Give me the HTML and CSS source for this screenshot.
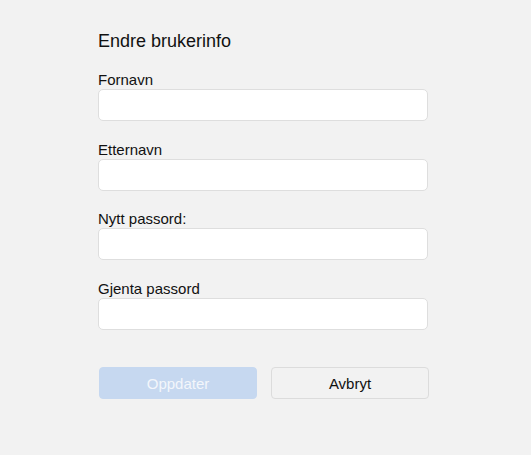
FILE: index.html
```html
<!DOCTYPE html>
<html lang="no">
<head>
<meta charset="utf-8">
<link rel="stylesheet" href="styles.css">
</head>
<body>
<div class="page">
  <form class="form">
    <h1 class="title">Endre brukerinfo</h1>
    <div class="group">
      <label class="label">Fornavn</label>
      <input class="input" type="text">
    </div>
    <div class="group">
      <label class="label">Etternavn</label>
      <input class="input" type="text">
    </div>
    <div class="group">
      <label class="label">Nytt passord:</label>
      <input class="input" type="password">
    </div>
    <div class="group">
      <label class="label">Gjenta passord</label>
      <input class="input" type="password">
    </div>
    <div class="actions">
      <button class="btn btn-primary" type="button" disabled>Oppdater</button>
      <button class="btn btn-secondary" type="button">Avbryt</button>
    </div>
  </form>
</div>
</body>
</html>
```
FILE: styles.css
```css
html, body {
  margin: 0;
  padding: 0;
  background: #f2f2f2;
}
body {
  font-family: "Liberation Sans", Arial, sans-serif;
  color: #111;
  width: 531px;
  height: 455px;
  overflow: hidden;
}
.page {
  padding: 31px 0 0 98px;
}
.form {
  width: 331px;
  display: flex;
  flex-direction: column;
}
.title {
  margin: 0 0 20px 0;
  font-size: 18px;
  font-weight: normal;
  line-height: 20px;
}
.group {
  display: flex;
  flex-direction: column;
  margin-bottom: 19.6px;
}
.label {
  font-size: 15px;
  line-height: 17px;
  margin-bottom: 1px;
}
.input {
  box-sizing: border-box;
  height: 32px;
  width: 330px;
  margin: 0;
  border: 1px solid #dedede;
  border-radius: 5px;
  background: #fff;
  font-family: inherit;
  font-size: 15px;
  padding: 0 8px;
  outline: none;
}
.actions {
  display: flex;
  gap: 14px;
  margin-top: 18px;
  margin-left: 1px;
  width: 330px;
}
.btn {
  flex: 1;
  box-sizing: border-box;
  height: 32px;
  border-radius: 4px;
  font-family: inherit;
  font-size: 15px;
  padding: 0;
}
.btn-primary {
  background: #c6d8f0;
  border: 1px solid #c6d8f0;
  color: #f3f6fb;
}
.btn-secondary {
  background: #f2f2f2;
  border: 1px solid #dcdcdc;
  color: #111;
}
```
